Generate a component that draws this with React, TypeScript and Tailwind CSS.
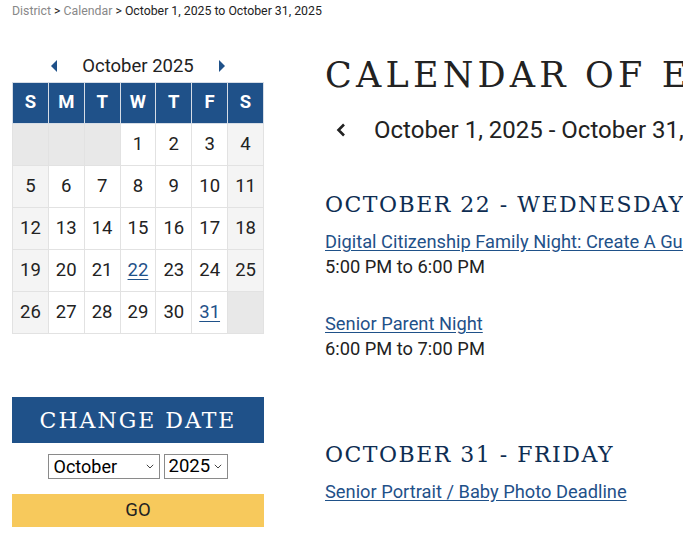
import React from "react";

const days: (number | null)[][] = [
  [null, null, null, 1, 2, 3, 4],
  [5, 6, 7, 8, 9, 10, 11],
  [12, 13, 14, 15, 16, 17, 18],
  [19, 20, 21, 22, 23, 24, 25],
  [26, 27, 28, 29, 30, 31, null],
];
const links = new Set([22, 31]);

function Chevron() {
  return (
    <svg
      width="8"
      height="5"
      viewBox="0 0 8 5"
      className="absolute right-[6px] top-[10px] pointer-events-none"
    >
      <polyline points="0.8,0.8 4,4 7.2,0.8" fill="none" stroke="#444" strokeWidth="1" />
    </svg>
  );
}

export default function App() {
  const slab = { fontFamily: '"DejaVu Serif", "Liberation Serif", serif' };
  return (
    <div
      className="w-[683px] h-[546px] overflow-hidden bg-white text-[#222]"
      style={{ fontFamily: 'Roboto, "Noto Sans", sans-serif' }}
    >
      <div className="px-[12px] pt-[3px] text-[12.3px] leading-[16px] whitespace-nowrap">
        <span className="text-[#888]">District</span>
        <span> &gt; </span>
        <span className="text-[#888]">Calendar</span>
        <span> &gt; October 1, 2025 to October 31, 2025</span>
      </div>
      <div className="flex pl-[12px]">
        {/* left */}
        <div className="w-[252px] shrink-0">
          <div className="mt-[34px] h-[26px] flex items-center justify-between px-[38px]">
            <svg width="8" height="12" viewBox="0 0 8 12">
              <polygon points="7,0 7,12 1,6" fill="#1f5189" />
            </svg>
            <span className="text-[18.5px] leading-[26px]">October 2025</span>
            <svg width="8" height="12" viewBox="0 0 8 12">
              <polygon points="1,0 1,12 7,6" fill="#1f5189" />
            </svg>
          </div>
          <table className="mt-[3px] w-[252px] border-collapse table-fixed">
            <thead>
              <tr>
                {["S", "M", "T", "W", "T", "F", "S"].map((d, i) => (
                  <th
                    key={i}
                    className="h-[41px] bg-[#1f5189] border border-[#d6dde6] text-white text-[18.5px] font-bold text-center"
                  >
                    {d}
                  </th>
                ))}
              </tr>
            </thead>
            <tbody>
              {days.map((row, r) => (
                <tr key={r}>
                  {row.map((d, c) => {
                    const weekend = c === 0 || c === 6;
                    const bg = d === null ? "bg-[#e8e8e8]" : weekend ? "bg-[#f4f4f4]" : "bg-white";
                    return (
                      <td
                        key={c}
                        className={`h-[42px] border border-[#e2e2e2] text-center text-[18.5px] ${bg}`}
                      >
                        {d !== null &&
                          (links.has(d) ? (
                            <a className="text-[#1f5189] underline underline-offset-[3px]">{d}</a>
                          ) : (
                            d
                          ))}
                      </td>
                    );
                  })}
                </tr>
              ))}
            </tbody>
          </table>
          <div
            className="mt-[63px] h-[46px] bg-[#1f5189] text-white flex items-center justify-center text-[22px] tracking-[2px]"
            style={slab}
          >
            CHANGE DATE
          </div>
          <div className="mt-[11px] flex justify-center gap-[4px] pr-[1px]">
            <div className="relative">
              <select
                className="appearance-none w-[112px] h-[25px] border border-[#8a8a8a] bg-white text-[18px] leading-[23px] pl-[5px] text-black"
                defaultValue="October"
              >
                <option>October</option>
              </select>
              <Chevron />
            </div>
            <div className="relative">
              <select
                className="appearance-none w-[64px] h-[25px] border border-[#8a8a8a] bg-white text-[18.5px] leading-[23px] pl-[4px] text-black"
                defaultValue="2025"
              >
                <option>2025</option>
              </select>
              <Chevron />
            </div>
          </div>
          <div className="mt-[14px] h-[33px] bg-[#f7c95c] flex items-center justify-center text-[18.5px] text-[#222]">
            GO
          </div>
        </div>
        {/* right */}
        <div className="ml-[61px] whitespace-nowrap">
          <div
            className="mt-[36px] text-[35px] leading-[40px] tracking-[4.2px] text-[#222]"
            style={slab}
          >
            CALENDAR OF EVENTS
          </div>
          <div className="mt-[20px] flex items-center h-[30px]">
            <svg width="10" height="14" viewBox="0 0 10 14" className="ml-[11px]">
              <polyline points="8,1.5 2.5,7 8,12.5" fill="none" stroke="#222" strokeWidth="2.6" />
            </svg>
            <span className="ml-[28px] text-[24px] leading-[30px]">
              October 1, 2025 - October 31, 2025
            </span>
          </div>
          <div
            className="mt-[45px] text-[22px] leading-[30px] tracking-[1.5px] text-[#0e2d52]"
            style={slab}
          >
            OCTOBER 22 - WEDNESDAY
          </div>
          <div className="mt-[9px] text-[18.3px] leading-[25px]">
            <a className="text-[#1f5189] underline underline-offset-[2px]">
              Digital Citizenship Family Night: Create A Guide
            </a>
          </div>
          <div className="text-[18.3px] leading-[25px]">5:00 PM to 6:00 PM</div>
          <div className="mt-[32px] text-[18.3px] leading-[25px]">
            <a className="text-[#1f5189] underline underline-offset-[2px]">Senior Parent Night</a>
          </div>
          <div className="text-[18.3px] leading-[25px]">6:00 PM to 7:00 PM</div>
          <div
            className="mt-[79px] text-[22px] leading-[30px] tracking-[1.5px] text-[#0e2d52]"
            style={slab}
          >
            OCTOBER 31 - FRIDAY
          </div>
          <div className="mt-[9px] text-[18.3px] leading-[25px]">
            <a className="text-[#1f5189] underline underline-offset-[2px]">
              Senior Portrait / Baby Photo Deadline
            </a>
          </div>
        </div>
      </div>
    </div>
  );
}
